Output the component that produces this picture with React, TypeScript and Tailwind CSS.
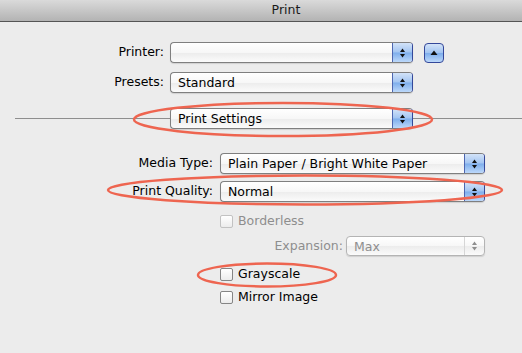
import type React from "react"

const font = { fontFamily: '"DejaVu Sans", "Liberation Sans", sans-serif' }

function Arrows({ color = "#111" }: { color?: string }) {
  return (
    <svg width="7" height="12" viewBox="0 0 7 12">
      <polygon points="3.5,1.5 1,5 6,5" fill={color} />
      <polygon points="1,7 6,7 3.5,10.5" fill={color} />
    </svg>
  )
}

interface PopupProps {
  width: number
  text?: string
  disabled?: boolean
  height?: string
}

function Popup({ width, text = "", disabled = false, height = "h-[21px]" }: PopupProps) {
  return (
    <div
      className={`flex ${height} overflow-hidden rounded-[4px] border shadow-[0_1px_1px_rgba(0,0,0,0.12)] ${
        disabled ? "border-[#b4b4b4]" : "border-[#7f7f7f] border-r-[#34489a]"
      } bg-[linear-gradient(#ffffff,#f7f7f7_50%,#ececec_52%,#fbfbfb)]`}
      style={{ width }}
    >
      <span className={`flex-1 pl-[7px] text-[12.5px] leading-[19px] ${disabled ? "text-[#8e8e8e]" : "text-black"}`}>
        {text}
      </span>
      {disabled ? (
        <div className="flex w-[20px] items-center justify-center border-l border-[#d6d6d6]">
          <Arrows color="#8e8e8e" />
        </div>
      ) : (
        <div className="flex w-[20px] items-center justify-center border-l border-[#4d66b0] bg-[linear-gradient(#d3e3f8,#a3c5f2_48%,#7eaeec_52%,#bcd8fa)]">
          <Arrows />
        </div>
      )}
    </div>
  )
}

function Checkbox({ label, disabled = false }: { label: string; disabled?: boolean }) {
  return (
    <div className="flex h-[16px] items-center">
      <div
        className={`h-[13px] w-[13px] rounded-[2px] border bg-[linear-gradient(#ffffff,#ececec)] ${
          disabled ? "border-[#c2c2c2]" : "border-[#858585]"
        }`}
      />
      <span className={`ml-[5px] text-[12.5px] ${disabled ? "text-[#8e8e8e]" : "text-black"}`}>{label}</span>
    </div>
  )
}

export default function App() {
  return (
    <div className="relative h-[353px] w-[522px] overflow-hidden bg-[#ececec] text-[12.5px]" style={font}>
      <div className="flex h-[22px] items-center justify-center border-b border-[#555] bg-[linear-gradient(#dadada,#b3b3b3)] pl-[50px] text-[12.5px] text-[#1a1a1a]">
        Print
      </div>

      <div className="mt-[20px] flex items-center">
        <div className="w-[164px] text-right">Printer:</div>
        <div className="ml-[6px]">
          <Popup width={243} />
        </div>
        <div className="ml-[11px] flex h-[20px] w-[20px] items-center justify-center rounded-[4px] border border-[#34489a] bg-[linear-gradient(#d3e3f8,#a3c5f2_48%,#7eaeec_52%,#bcd8fa)]">
          <svg width="8" height="6" viewBox="0 0 8 6">
            <polygon points="4,0.5 0.5,5 7.5,5" fill="#111" />
          </svg>
        </div>
      </div>

      <div className="mt-[9px] flex items-center">
        <div className="w-[164px] text-right">Presets:</div>
        <div className="ml-[6px]">
          <Popup width={243} text="Standard" />
        </div>
      </div>

      <div className="mt-[15px] flex items-center">
        <div className="ml-[15px] h-px w-[155px] bg-[#8e8e8e]" />
        <Popup width={243} text="Print Settings" />
        <div className="h-px flex-1 bg-[#8e8e8e]" />
      </div>

      <div className="mt-[24px] flex items-center">
        <div className="w-[213px] text-right">Media Type:</div>
        <div className="ml-[7px]">
          <Popup width={265} text="Plain Paper / Bright White Paper" />
        </div>
      </div>

      <div className="mt-[7px] flex items-center">
        <div className="w-[213px] text-right">Print Quality:</div>
        <div className="ml-[7px]">
          <Popup width={265} text="Normal" />
        </div>
      </div>

      <div className="mt-[11px] pl-[220px]">
        <Checkbox label="Borderless" disabled />
      </div>

      <div className="mt-[7px] flex items-center">
        <div className="w-[343px] text-right text-[#8e8e8e]">Expansion:</div>
        <div className="ml-[3px]">
          <Popup width={139} text="Max" disabled height="h-[20px]" />
        </div>
      </div>

      <div className="mt-[10px] pl-[220px]">
        <Checkbox label="Grayscale" />
      </div>

      <div className="mt-[7px] pl-[220px]">
        <Checkbox label="Mirror Image" />
      </div>

      <svg className="pointer-events-none absolute inset-0" width="522" height="353">
        <g fill="none" stroke="#ee6550" strokeWidth="2.5">
          <ellipse cx="283" cy="119.5" rx="149" ry="16.5" />
          <ellipse cx="305" cy="190" rx="197" ry="14.5" />
          <ellipse cx="267" cy="275" rx="69" ry="11.5" />
        </g>
      </svg>
    </div>
  )
}
